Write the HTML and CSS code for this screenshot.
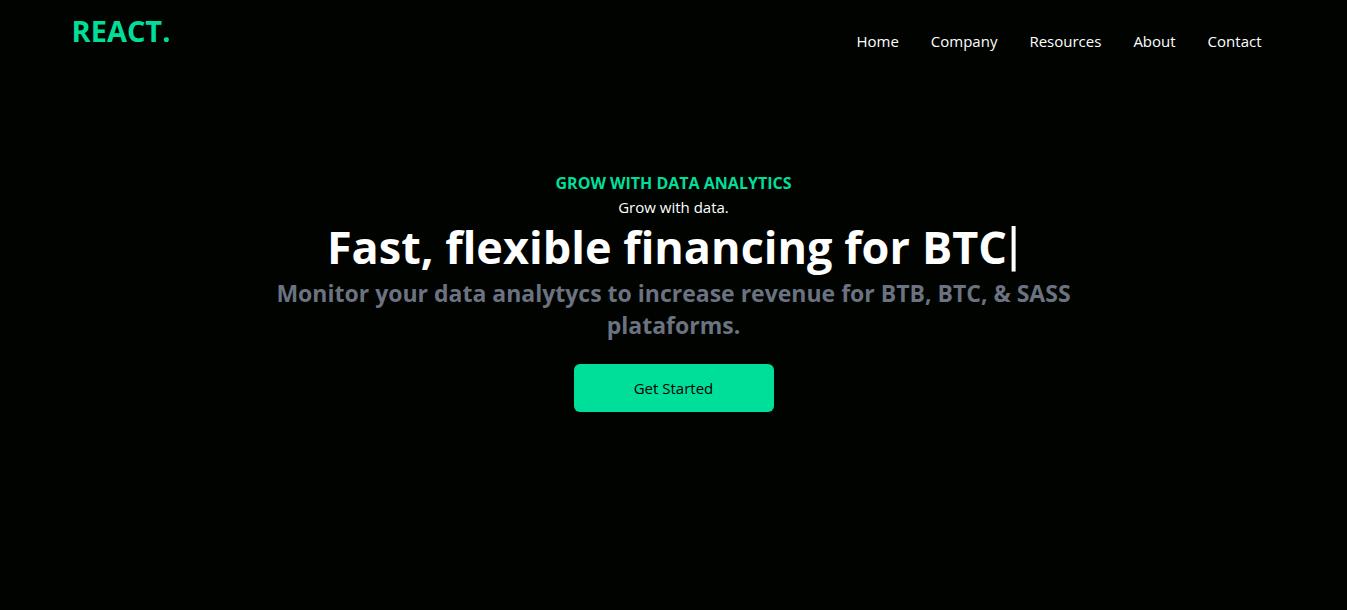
FILE: index.html
```html
<!DOCTYPE html>
<html lang="en">
<head>
<meta charset="utf-8">
<meta name="viewport" content="width=device-width, initial-scale=1">
<title>REACT.</title>
<link rel="stylesheet" href="styles.css">
</head>
<body>
<header class="navbar">
  <h1 class="brand">REACT.</h1>
  <nav>
    <ul class="nav-list">
      <li><a href="#">Home</a></li>
      <li><a href="#">Company</a></li>
      <li><a href="#">Resources</a></li>
      <li><a href="#">About</a></li>
      <li><a href="#">Contact</a></li>
    </ul>
  </nav>
</header>
<main class="hero">
  <p class="eyebrow">GROW WITH DATA ANALYTICS</p>
  <p class="lead">Grow with data.</p>
  <div class="headline">
    <h2>Fast, flexible financing for</h2>
    <span class="typed">BTC<span class="cursor">|</span></span>
  </div>
  <p class="summary">Monitor your data analytycs to increase revenue for BTB, BTC, &amp; SASS plataforms.</p>
  <button class="cta" type="button">Get Started</button>
</main>
</body>
</html>
```

FILE: styles.css
```css
* {
  box-sizing: border-box;
  margin: 0;
  padding: 0;
}

body {
  background: #000300;
  color: #fff;
  font-family: "Segoe UI", "Open Sans", "Noto Sans", sans-serif;
  font-size: 15px;
  line-height: 24px;
}

.navbar {
  display: flex;
  justify-content: space-between;
  max-width: 1240px;
  margin: 0 auto;
  padding: 13px 16px 0 18px;
}

.brand {
  color: #00df9a;
  font-size: 29px;
  line-height: 36px;
}

.nav-list {
  display: flex;
  list-style: none;
  padding-top: 16px;
}

.nav-list a {
  display: block;
  padding: 0 16px;
  color: inherit;
  text-decoration: none;
}

.hero {
  display: flex;
  flex-direction: column;
  align-items: center;
  max-width: 800px;
  margin: 0 auto;
  padding-top: 118px;
  text-align: center;
}

.eyebrow {
  color: #00df9a;
  font-size: 16px;
  font-weight: 700;
}

.headline {
  display: flex;
  justify-content: center;
  gap: 12px;
  padding-bottom: 2px;
  font-size: 45px;
  font-weight: 700;
  line-height: 56px;
  white-space: nowrap;
}

.headline h2 {
  font-size: inherit;
}

.cursor {
  font-family: Roboto, sans-serif;
  font-size: 54px;
  font-weight: 400;
  line-height: 1;
}

.summary {
  color: #6b7280;
  font-size: 23px;
  font-weight: 700;
  line-height: 32px;
}

.cta {
  width: 200px;
  margin-top: 23px;
  padding: 12px 0;
  border: 0;
  border-radius: 6px;
  background: #00df9a;
  color: #000;
  font: inherit;
}
```
